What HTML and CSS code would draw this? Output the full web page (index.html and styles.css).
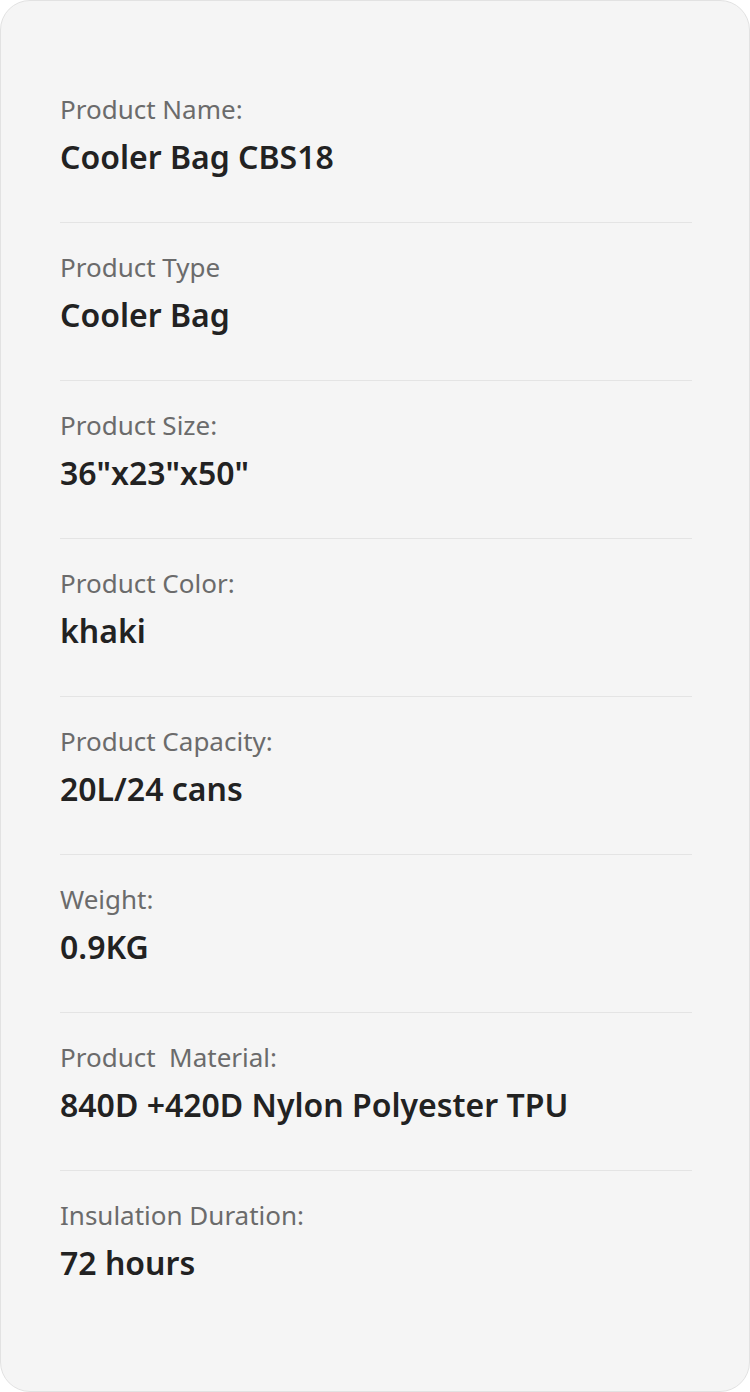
FILE: index.html
```html
<!DOCTYPE html>
<html lang="en">
<head>
  <meta charset="UTF-8" />
  <meta name="viewport" content="width=device-width, initial-scale=1.0" />
  <title>Product Specs</title>
  <link rel="stylesheet" href="styles.css">
</head>
<body>
  <div class="spec-card">
    <div class="spec-row">
      <div class="spec-label">Product Name:</div>
      <div class="spec-value">Cooler Bag CBS18</div>
    </div>
    <div class="spec-row">
      <div class="spec-label">Product Type</div>
      <div class="spec-value">Cooler Bag</div>
    </div>
    <div class="spec-row">
      <div class="spec-label">Product Size:</div>
      <div class="spec-value">36"x23"x50"</div>
    </div>
    <div class="spec-row">
      <div class="spec-label">Product Color:</div>
      <div class="spec-value">khaki</div>
    </div>
    <div class="spec-row">
      <div class="spec-label">Product Capacity:</div>
      <div class="spec-value">20L/24 cans</div>
    </div>
    <div class="spec-row">
      <div class="spec-label">Weight:</div>
      <div class="spec-value">0.9KG</div>
    </div>
    <div class="spec-row">
      <div class="spec-label">Product&nbsp; Material:</div>
      <div class="spec-value">840D +420D Nylon Polyester TPU</div>
    </div>
    <div class="spec-row">
      <div class="spec-label">Insulation Duration:</div>
      <div class="spec-value">72 hours</div>
    </div>
  </div>
</body>
</html>
```

FILE: styles.css
```css
:root {
  font-family: "Noto Sans", sans-serif;
}

body {
  margin: 0;
  background: #fff;
}

.spec-card {
  box-sizing: border-box;
  width: 750px;
  height: 1392px;
  padding: 64px 57px 0 59px;
  background: #f5f5f5;
  border: 1px solid #e2e2e2;
  border-radius: 30px;
}

.spec-row {
  padding: 26px 0 43px;
  border-bottom: 1px solid #e4e4e4;
}

.spec-row:last-child {
  border-bottom: none;
}

.spec-label {
  font-size: 26px;
  line-height: 36px;
  color: #6b6b6b;
}

.spec-value {
  margin-top: 8px;
  font-size: 32px;
  line-height: 44px;
  font-weight: 600;
  color: #222;
}
```
